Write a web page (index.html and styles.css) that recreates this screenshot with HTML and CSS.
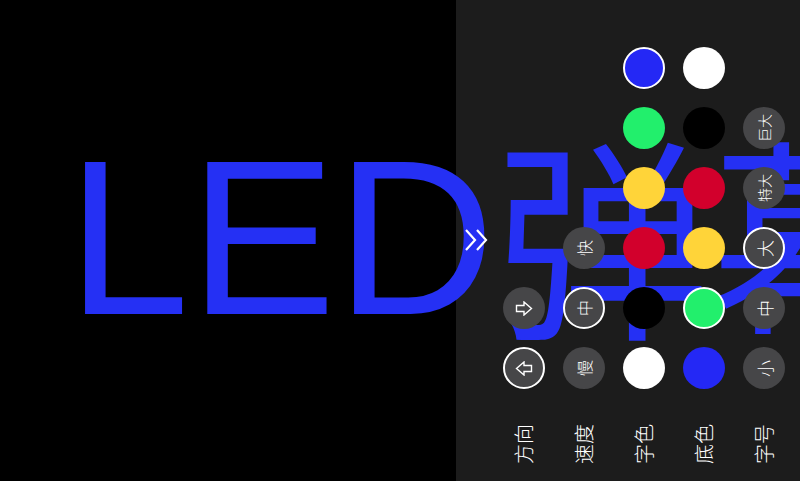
FILE: index.html
```html
<!DOCTYPE html>
<html lang="zh-CN">
<head>
<meta charset="utf-8">
<title>LED弹幕</title>
<link rel="stylesheet" href="styles.css">
</head>
<body>
<div class="screen">
  <div class="stage"></div>
  <div class="marquee">LED<span class="cjk">弹幕</span></div>
  <aside class="panel">
    <div class="handle">
      <svg width="26" height="22" viewBox="0 0 26 22"><path d="M2 1 L11 11 L2 21 M13 1 L22 11 L13 21" fill="none" stroke="#fff" stroke-width="2.2" stroke-linejoin="miter"/></svg>
    </div>
    <div class="grid">
      <div class="col">
        <div class="cell"></div><div class="cell"></div><div class="cell"></div><div class="cell"></div>
        <div class="cell"><button class="btn">
          <svg width="18" height="15" viewBox="0 0 18 15"><path d="M1.5 4.5 H9 V1 L16.5 7.5 L9 14 V10.5 H1.5 Z" fill="none" stroke="#fff" stroke-width="1.4" stroke-linejoin="miter"/></svg>
        </button></div>
        <div class="cell"><button class="btn on">
          <svg width="18" height="15" viewBox="0 0 18 15"><path d="M16.5 4.5 H9 V1 L1.5 7.5 L9 14 V10.5 H16.5 Z" fill="none" stroke="#fff" stroke-width="1.4" stroke-linejoin="miter"/></svg>
        </button></div>
        <div class="label"><span>方向</span></div>
      </div>
      <div class="col">
        <div class="cell"></div><div class="cell"></div><div class="cell"></div>
        <div class="cell"><button class="btn"><span class="t">快</span></button></div>
        <div class="cell"><button class="btn on"><span class="t">中</span></button></div>
        <div class="cell"><button class="btn"><span class="t">慢</span></button></div>
        <div class="label"><span>速度</span></div>
      </div>
      <div class="col">
        <div class="cell"><button class="dot blue on"></button></div>
        <div class="cell"><button class="dot green"></button></div>
        <div class="cell"><button class="dot yellow"></button></div>
        <div class="cell"><button class="dot red"></button></div>
        <div class="cell"><button class="dot black"></button></div>
        <div class="cell"><button class="dot white"></button></div>
        <div class="label"><span>字色</span></div>
      </div>
      <div class="col">
        <div class="cell"><button class="dot white"></button></div>
        <div class="cell"><button class="dot black"></button></div>
        <div class="cell"><button class="dot red"></button></div>
        <div class="cell"><button class="dot yellow"></button></div>
        <div class="cell"><button class="dot green on"></button></div>
        <div class="cell"><button class="dot blue"></button></div>
        <div class="label"><span>底色</span></div>
      </div>
      <div class="col">
        <div class="cell"></div>
        <div class="cell"><button class="btn"><span class="t sm">巨大</span></button></div>
        <div class="cell"><button class="btn"><span class="t sm">特大</span></button></div>
        <div class="cell"><button class="btn on"><span class="t lg">大</span></button></div>
        <div class="cell"><button class="btn"><span class="t lg">中</span></button></div>
        <div class="cell"><button class="btn"><span class="t lg">小</span></button></div>
        <div class="label"><span>字号</span></div>
      </div>
    </div>
  </aside>
</div>
</body>
</html>
```

FILE: styles.css
```css
html, body {
  margin: 0;
  padding: 0;
  background: #000;
  overflow: hidden;
}
body {
  font-family: "Noto Sans CJK SC", "Noto Sans", sans-serif;
}
.screen {
  position: relative;
  display: flex;
  width: 800px;
  height: 481px;
  background: #000;
  overflow: hidden;
}
.stage {
  flex: 1;
}
.marquee {
  position: absolute;
  left: 67px;
  top: 122px;
  font-family: "Liberation Sans", "Noto Sans CJK SC", sans-serif;
  font-size: 220px;
  line-height: 220px;
  color: #2530f4;
  white-space: nowrap;
  z-index: 1;
  pointer-events: none;
}
.cjk {
  font-family: "Noto Sans CJK SC", sans-serif;
  font-size: 215px;
  line-height: 1;
  vertical-align: -9px;
}
.panel {
  width: 344px;
  height: 481px;
  background: #1c1c1c;
  display: flex;
  box-sizing: border-box;
  padding-right: 6px;
}
.handle {
  width: 38px;
  display: flex;
  align-items: center;
  justify-content: center;
  position: relative;
  z-index: 2;
  padding-left: 4px;
  padding-bottom: 1px;
}
.handle svg {
  display: block;
}
.grid {
  display: flex;
  padding-top: 38px;
}
.col {
  width: 60px;
  display: flex;
  flex-direction: column;
}
.cell {
  height: 60px;
  display: flex;
  align-items: center;
  justify-content: center;
}
.label {
  height: 60px;
  margin-top: 16px;
  display: flex;
  align-items: center;
  justify-content: center;
}
.label span {
  display: inline-block;
  transform: rotate(-90deg);
  color: #fff;
  font-size: 20px;
  font-weight: 300;
  line-height: 1;
  white-space: nowrap;
}
.btn, .dot {
  position: relative;
  z-index: 2;
  width: 42px;
  height: 42px;
  border-radius: 50%;
  border: 0;
  padding: 0;
  margin: 0;
  box-sizing: border-box;
  display: flex;
  align-items: center;
  justify-content: center;
}
.btn {
  background: #464648;
}
.btn.on, .dot.on {
  border: 2px solid #fff;
}
.btn svg {
  display: block;
}
.t {
  display: inline-block;
  transform: rotate(-90deg);
  color: #fff;
  font-family: "Noto Sans CJK SC", sans-serif;
  font-size: 16px;
  font-weight: 300;
  line-height: 1;
  white-space: nowrap;
}
.t.sm {
  font-size: 14px;
}
.t.lg {
  font-size: 17px;
}
.blue { background: #2428f5; }
.green { background: #22ef6c; }
.yellow { background: #ffd439; }
.red { background: #d2002c; }
.black { background: #000; }
.white { background: #fff; }
```
